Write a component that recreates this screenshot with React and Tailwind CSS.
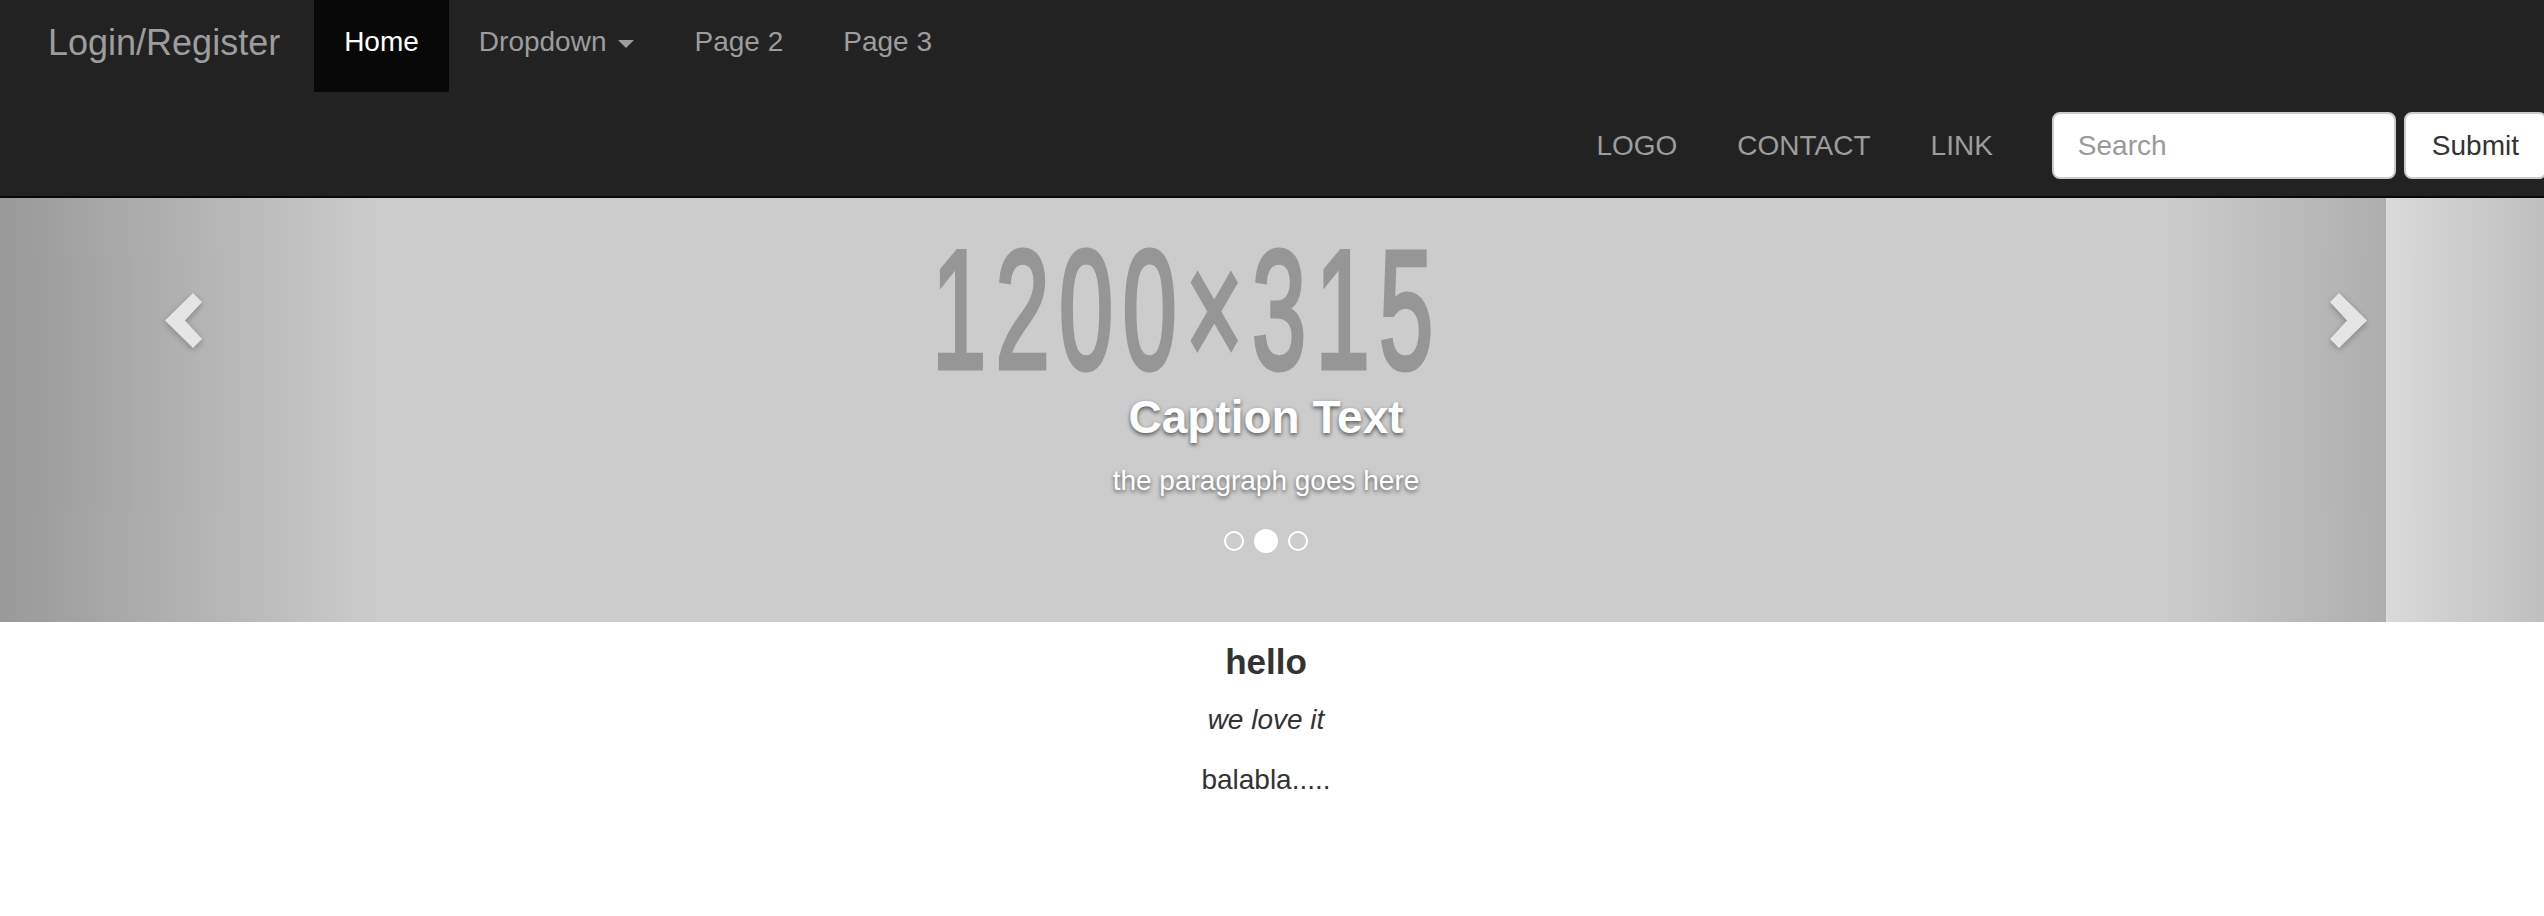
import React from 'react';

const navLinks = ['Page 2', 'Page 3'];
const rightLinks = ['LOGO', 'CONTACT', 'LINK'];

const Chevron = ({ dir }) => (
  <svg
    width="38"
    height="55"
    viewBox="0 0 38 55"
    className="drop-shadow-[0_2px_3px_rgba(0,0,0,0.6)]"
  >
    {dir === 'left' ? (
      <polygon points="37,9 28,0 0,27.5 28,55 37,46 20,27.5" fill="#fff" />
    ) : (
      <polygon points="1,9 10,0 38,27.5 10,55 1,46 18,27.5" fill="#fff" />
    )}
  </svg>
);

const Navbar = () => (
  <nav className="bg-[#222222] border-b-2 border-[#080808]">
    {/* top row */}
    <div className="flex items-start h-[92px]">
      <a className="pl-[48px] pr-[34px] pt-[23px] text-[36px] leading-[40px] text-[#9d9d9d]">
        Login/Register
      </a>
      <a className="px-[30px] pt-[22px] pb-[30px] h-[92px] text-[28px] leading-[40px] bg-[#080808] text-white">
        Home
      </a>
      <a className="px-[30px] pt-[22px] pb-[30px] text-[28px] leading-[40px] text-[#9d9d9d] whitespace-nowrap">
        Dropdown
        <span className="inline-block align-middle ml-[12px] w-0 h-0 border-t-[8px] border-t-[#9d9d9d] border-x-[8px] border-x-transparent" />
      </a>
      {navLinks.map((l) => (
        <a key={l} className="px-[30px] pt-[22px] pb-[30px] text-[28px] leading-[40px] text-[#9d9d9d]">
          {l}
        </a>
      ))}
    </div>

    {/* second row */}
    <div className="flex items-center justify-end h-[104px] pt-[3px]">
      {rightLinks.map((l) => (
        <a key={l} className="px-[30px] text-[28px] leading-[40px] text-[#9d9d9d]">
          {l}
        </a>
      ))}
      <form className="flex items-center pl-[29px] -mr-[3px]">
        <input
          placeholder="Search"
          className="w-[344px] h-[67px] bg-white rounded-[8px] border-2 border-[#cccccc] px-[24px] text-[28px] text-[#555] placeholder:text-[#999] outline-none"
        />
        <button
          type="button"
          className="ml-[8px] h-[67px] bg-white rounded-[8px] border-2 border-[#cccccc] px-[26px] text-[28px] text-[#333]"
        >
          Submit
        </button>
      </form>
    </div>
  </nav>
);

const Carousel = () => (
  <div className="relative h-[424px] bg-white overflow-hidden">
    {/* placeholder slide image */}
    <svg width="2386" height="424" viewBox="0 0 2386 424" className="block">
      <rect width="2386" height="424" fill="#cccccc" />
      <text
        transform="translate(932,170) scale(0.58,1)"
        fontFamily="'Liberation Sans', Arial, sans-serif"
        fontWeight="400"
        fontSize="168"
        letterSpacing="16"
        fill="#969696"
        stroke="#969696"
        strokeWidth="5"
      >
        1200×315
      </text>
    </svg>

    {/* controls */}
    <div className="absolute inset-y-0 left-0 w-[15%] opacity-50 bg-linear-to-r from-[rgba(0,0,0,0.5)] to-[rgba(0,0,0,0)]">
      <div className="absolute left-[165px] top-[95px]">
        <Chevron dir="left" />
      </div>
    </div>
    <div className="absolute inset-y-0 right-0 w-[15%] opacity-50 bg-linear-to-l from-[rgba(0,0,0,0.5)] to-[rgba(0,0,0,0)]">
      <div className="absolute left-[167px] top-[95px]">
        <Chevron dir="right" />
      </div>
    </div>

    {/* caption */}
    <div className="absolute left-0 right-[12px] top-[194px] text-center text-white [text-shadow:0_2px_4px_rgba(0,0,0,0.6)]">
      <h3 className="text-[46px] leading-[50px] font-bold">Caption Text</h3>
      <p className="mt-[19px] text-[28px] leading-[40px]">the paragraph goes here</p>
    </div>

    {/* indicators */}
    <div className="absolute left-0 right-[12px] top-[331px] flex items-center justify-center gap-[10px] h-[24px]">
      <span className="w-[20px] h-[20px] rounded-full border-2 border-white" />
      <span className="w-[24px] h-[24px] rounded-full bg-white" />
      <span className="w-[20px] h-[20px] rounded-full border-2 border-white" />
    </div>
  </div>
);

export default function App() {
  return (
    <div className="w-full min-h-screen overflow-hidden bg-white font-['Liberation_Sans',Arial,sans-serif]">
      <Navbar />
      <Carousel />
      <div className="pr-[12px] pt-[20px] text-center text-[#333]">
        <h3 className="text-[35px] leading-[40px] font-bold">hello</h3>
        <p className="mt-[20px] text-[28px] leading-[36px] italic">we love it</p>
        <p className="mt-[24px] text-[28px] leading-[36px]">balabla.....</p>
      </div>
    </div>
  );
}
